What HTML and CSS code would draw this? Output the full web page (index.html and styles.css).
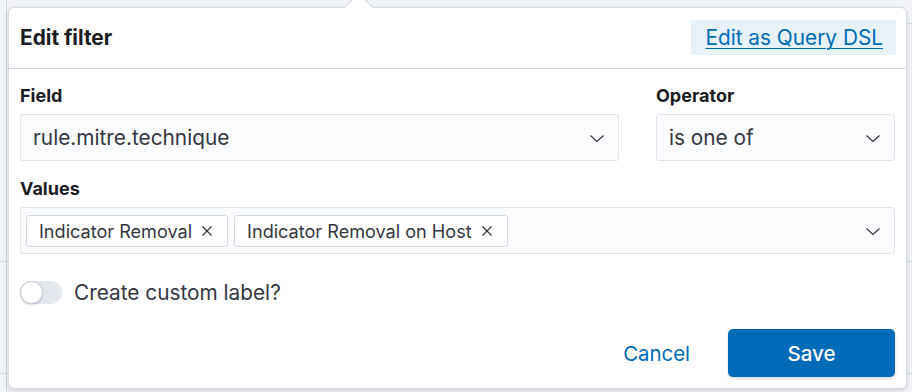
FILE: index.html
```html
<!DOCTYPE html>
<html lang="en">
<head>
<meta charset="utf-8">
<title>Edit filter</title>
<link rel="stylesheet" href="styles.css">
</head>
<body>
<div class="page">
  <div class="popover">
    <span class="arrow"></span>
    <div class="pop-header">
      <h2 class="title">Edit filter</h2>
      <a class="dsl-link" href="#">Edit as Query DSL</a>
    </div>
    <div class="pop-body">
      <div class="row">
        <div class="col col-field">
          <label class="label">Field</label>
          <div class="select">
            <span class="select-text">rule.mitre.technique</span>
            <svg class="chev" width="16" height="16" viewBox="0 0 16 16"><path d="M1.5 5.5 L8 11.5 L14.5 5.5" fill="none" stroke="#343741" stroke-width="1.2"/></svg>
          </div>
        </div>
        <div class="col col-op">
          <label class="label">Operator</label>
          <div class="select">
            <span class="select-text">is one of</span>
            <svg class="chev" width="16" height="16" viewBox="0 0 16 16"><path d="M1.5 5.5 L8 11.5 L14.5 5.5" fill="none" stroke="#343741" stroke-width="1.2"/></svg>
          </div>
        </div>
      </div>
      <div class="row row-values">
        <div class="col col-full">
          <label class="label">Values</label>
          <div class="select combo">
            <div class="chips">
              <span class="chip">Indicator Removal<svg class="x" width="12" height="12" viewBox="0 0 12 12"><path d="M1.5 1.5 L10.5 10.5 M10.5 1.5 L1.5 10.5" stroke="#343741" stroke-width="1.2"/></svg></span>
              <span class="chip">Indicator Removal on Host<svg class="x" width="12" height="12" viewBox="0 0 12 12"><path d="M1.5 1.5 L10.5 10.5 M10.5 1.5 L1.5 10.5" stroke="#343741" stroke-width="1.2"/></svg></span>
            </div>
            <svg class="chev" width="16" height="16" viewBox="0 0 16 16"><path d="M1.5 5.5 L8 11.5 L14.5 5.5" fill="none" stroke="#343741" stroke-width="1.2"/></svg>
          </div>
        </div>
      </div>
      <div class="toggle-row">
        <span class="switch"><span class="knob"></span></span>
        <span class="toggle-label">Create custom label?</span>
      </div>
      <div class="footer">
        <a class="cancel" href="#">Cancel</a>
        <button class="save" type="button">Save</button>
      </div>
    </div>
  </div>
</div>
</body>
</html>
```
FILE: styles.css
```css
* { box-sizing: border-box; }
html, body { margin: 0; padding: 0; }
body {
  width: 912px;
  height: 392px;
  overflow: hidden;
  font-family: Inter, "Noto Sans", sans-serif;
  background:
    linear-gradient(#d3dae6, #d3dae6) 0 261px / 8px 1px no-repeat,
    linear-gradient(#d3dae6, #d3dae6) 907px 261px / 5px 1px no-repeat,
    linear-gradient(#d3dae6, #d3dae6) 0 373px / 8px 1px no-repeat,
    linear-gradient(#d3dae6, #d3dae6) 907px 373px / 5px 1px no-repeat,
    linear-gradient(#d3dae6, #d3dae6) 907px 23px / 5px 1px no-repeat,
    linear-gradient(#d3dae6, #d3dae6) 6px 0 / 1px 392px no-repeat,
    #f1f3f7;
  color: #343741;
}
.page {
  padding: 7px 5px 0 8px;
}
.popover {
  position: relative;
  width: 899px;
  height: 382px;
  background: #fff;
  border: 1px solid #d3dae6;
  border-radius: 6px;
  box-shadow: 0 1px 4px rgba(0,0,0,0.08), 0 3px 10px rgba(0,0,0,0.05);
}
.arrow {
  position: absolute;
  left: 339px;
  top: -11px;
  width: 21px;
  height: 21px;
  background: #fff;
  border-left: 1px solid #d3dae6;
  border-top: 1px solid #d3dae6;
  transform: rotate(45deg);
}
.pop-header {
  position: relative;
  height: 61px;
  display: flex;
  align-items: center;
  justify-content: space-between;
  padding: 0 10px 1px 11px;
  border-bottom: 1px solid #d3dae6;
}
.title {
  margin: 0;
  font-size: 20.8px;
  font-weight: 700;
  color: #1a1c21;
}
.dsl-link {
  display: flex;
  align-items: center;
  height: 35px;
  padding: 0 13px 0 14px;
  background: #e6f1fa;
  color: #006bb8;
  font-size: 20.8px;
  text-decoration: underline;
  text-underline-offset: 3px;
  text-decoration-thickness: 1px;
  border-radius: 2px;
}
.pop-body {
  padding: 16px 11px 10px 11px;
}
.row {
  display: flex;
  gap: 37px;
}
.row-values { margin-top: 17px; }
.col { display: flex; flex-direction: column; }
.col-field { width: 599px; }
.col-op { width: 239px; }
.col-full { width: 875px; }
.label {
  font-size: 18px;
  font-weight: 700;
  color: #1a1c21;
  line-height: 22px;
  margin-bottom: 7px;
}
.select {
  height: 47px;
  background: #fbfcfd;
  border: 1px solid #e1e5ee;
  border-radius: 3px;
  display: flex;
  align-items: center;
  justify-content: space-between;
  padding: 0 13px 0 12px;
}
.select-text {
  font-size: 20.8px;
  color: #343741;
}
.chev { flex: none; }
.combo { padding-left: 5px; }
.chips { display: flex; gap: 6px; }
.chip {
  display: inline-flex;
  align-items: center;
  height: 32px;
  padding: 0 14px 0 12px;
  background: #fff;
  border: 1px solid #d3dae6;
  border-radius: 3px;
  font-size: 18.1px;
  color: #343741;
}
.chip .x { margin-left: 9px; }
.toggle-row {
  display: flex;
  align-items: center;
  margin-top: 23px;
  height: 30px;
}
.switch {
  position: relative;
  width: 42px;
  height: 23px;
  border-radius: 12px;
  background: #e3e7ee;
}
.knob {
  position: absolute;
  left: 0;
  top: 0;
  width: 23px;
  height: 23px;
  border-radius: 50%;
  background: #fff;
  border: 1px solid #c6ccd6;
  box-shadow: 0 1px 2px rgba(0,0,0,0.15);
}
.toggle-label {
  margin-left: 12px;
  font-size: 20.8px;
  color: #343741;
}
.footer {
  display: flex;
  justify-content: flex-end;
  align-items: center;
  margin-top: 22px;
}
.cancel {
  color: #006bb8;
  font-size: 20.4px;
  text-decoration: none;
  margin-right: 38px;
}
.save {
  width: 167px;
  height: 48px;
  border: none;
  border-radius: 5px;
  background: #006bb8;
  color: #fff;
  font-family: Inter, "Noto Sans", sans-serif;
  font-size: 20.6px;
  font-weight: 500;
  box-shadow: 0 2px 3px rgba(0,0,0,0.15);
}
```
